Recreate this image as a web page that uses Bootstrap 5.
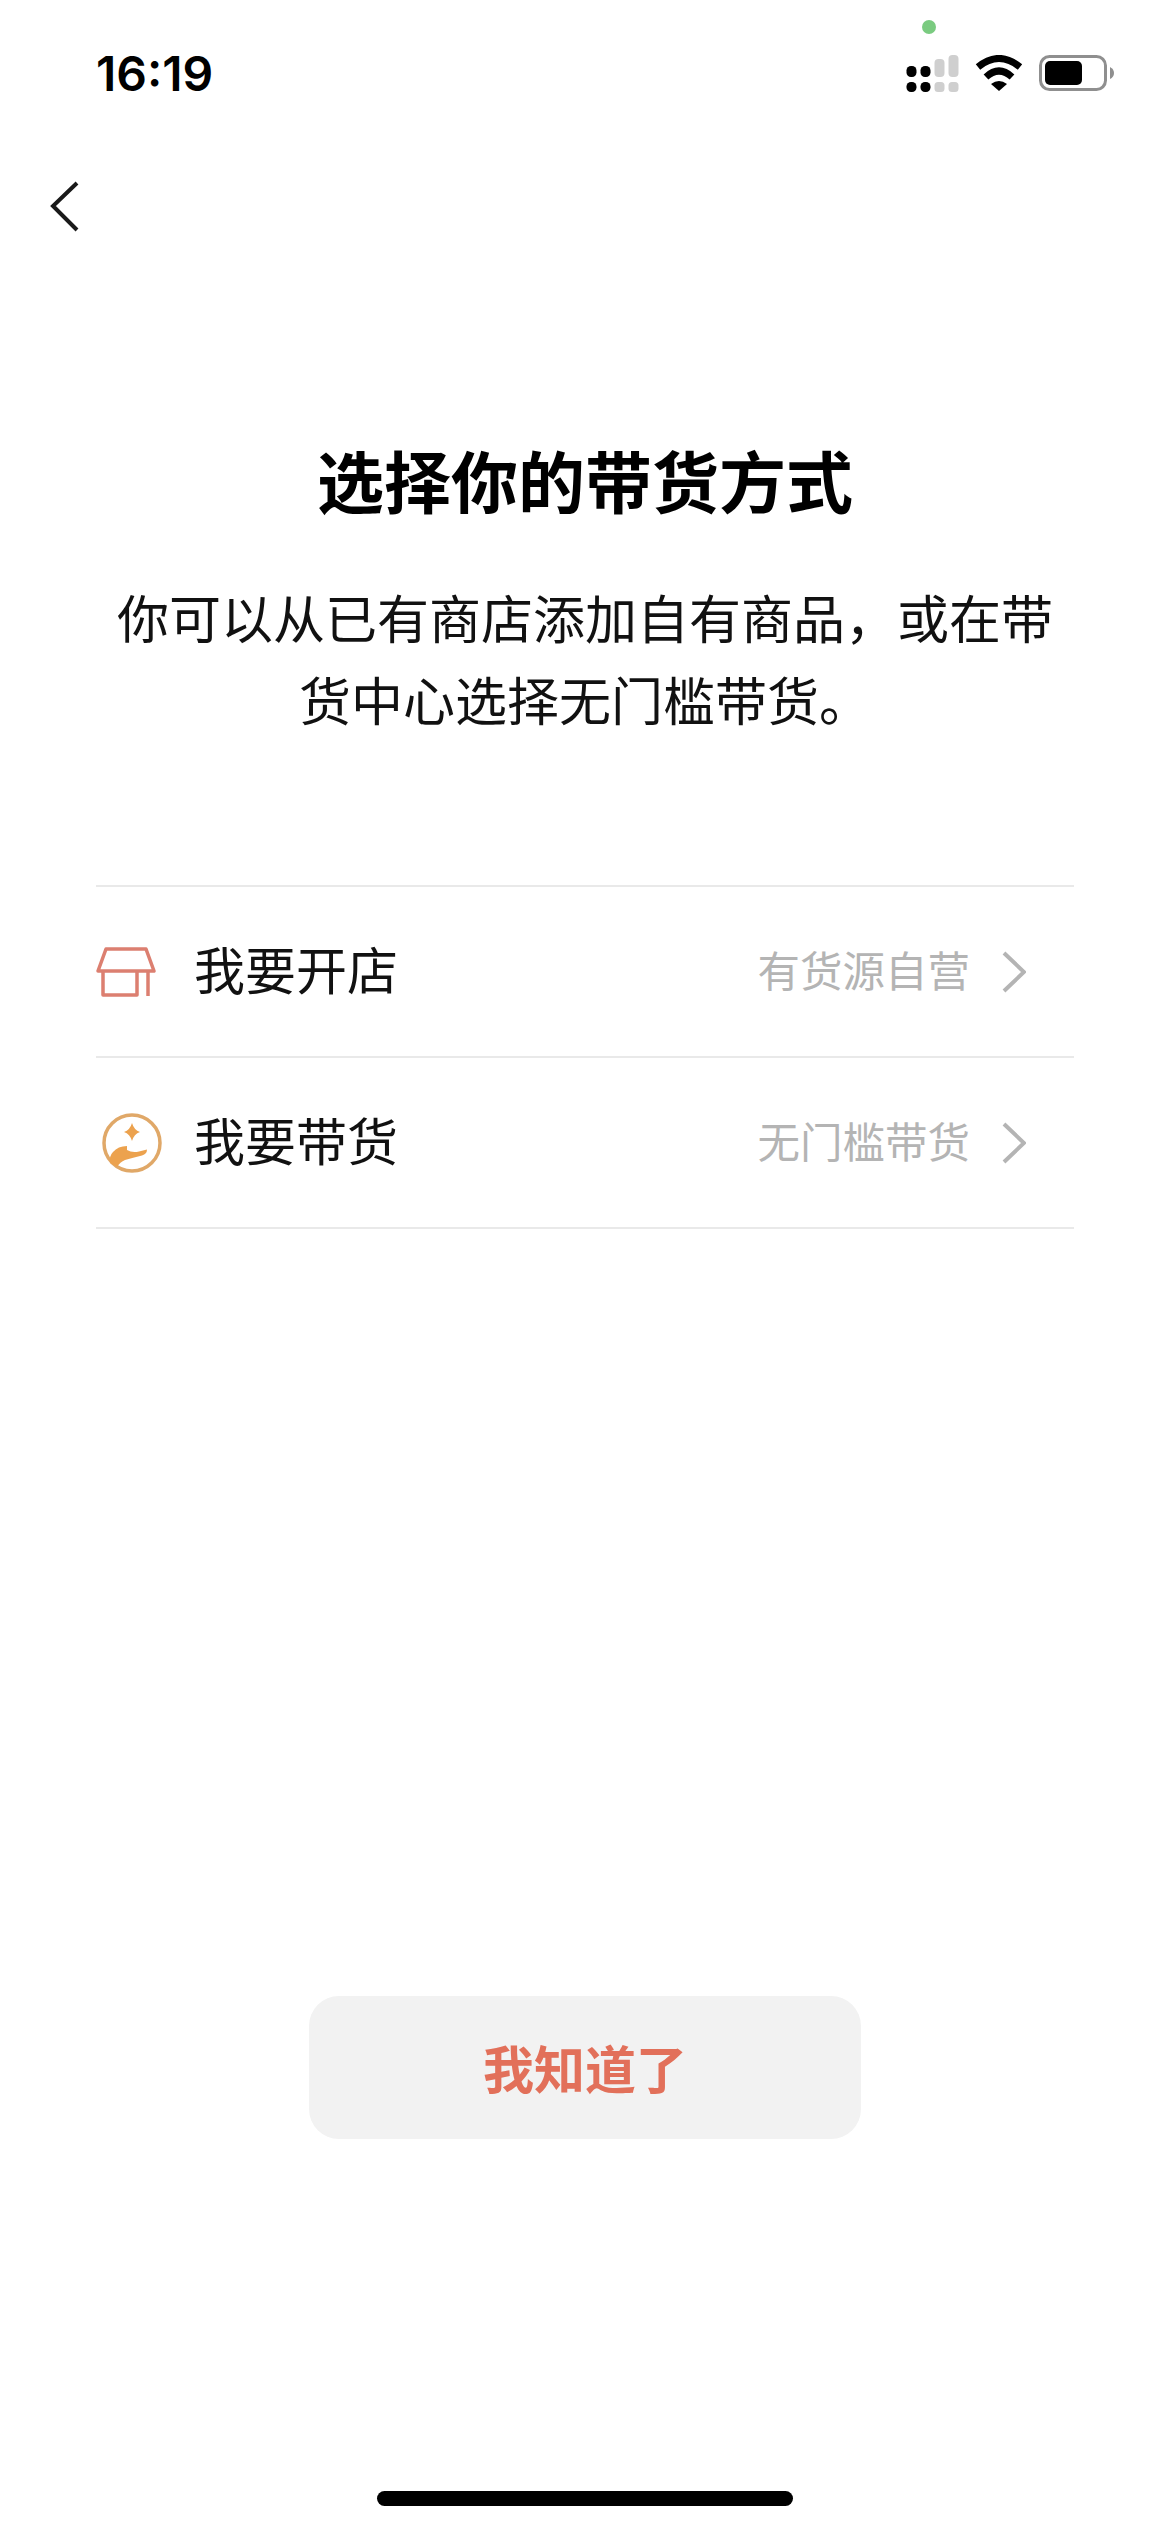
<!DOCTYPE html>
<html lang="zh-CN">
<head>
    <meta charset="UTF-8" />
    <meta name="viewport" content="width=device-width, initial-scale=1.0"/>
    <title>选择你的带货方式</title>
    <link href="https://cdn.jsdelivr.net/npm/bootstrap@5.3.0/dist/css/bootstrap.min.css" rel="stylesheet">
    <style>
        body {
            background: #fff;
            color: #000;
            font-family: "Noto Sans CJK SC", "Liberation Sans", sans-serif;
        }
        .screen {
            width: 1170px;
            height: 2532px;
            overflow: hidden;
        }
        .status-row {
            height: 100px;
            padding: 0 55px 0 96px;
            position: relative;
        }
        .status-time {
            font-family: Inter, "Liberation Sans", sans-serif;
            font-size: 48px;
            font-weight: 600;
            line-height: 50px;
            padding-top: 49px;
        }
        .status-icons {
            padding-top: 55px;
            gap: 16px;
        }
        .green-dot {
            position: absolute;
            left: 922px;
            top: 20px;
            width: 14px;
            height: 14px;
            border-radius: 50%;
            background: #7acb80;
        }
        .back-row {
            height: 100px;
            padding: 81px 0 0 50px;
        }
        .page-title {
            font-size: 67px;
            font-weight: 700;
            line-height: 90px;
            text-align: center;
            margin: 234px 0 0;
        }
        .page-sub {
            font-size: 52px;
            line-height: 82px;
            text-align: center;
            color: #111;
            width: 960px;
            margin: 52px auto 0;
        }
        .choice-list {
            margin: 145px 96px 0;
            border-top: 2px solid #e9e9e9;
        }
        .choice-list > .choice-item,
        .choice-list > .choice-item:last-child {
            height: 171px;
            padding: 0;
            border-bottom: 2px solid #e9e9e9;
            background: transparent;
        }
        .choice-icon {
            width: 98px;
        }
        .choice-name {
            font-size: 51px;
            color: #111;
            padding-bottom: 6px;
        }
        .choice-hint {
            font-size: 42.5px;
            color: #b4b4b4;
            margin-right: 32px;
            padding-bottom: 6px;
        }
        .choice-arrow {
            margin-right: 48px;
        }
        .know-btn {
            width: 552px;
            height: 143px;
            margin: 0 auto;
            background: #f2f2f2;
            border: 0;
            border-radius: 30px;
            font-size: 51px;
            font-weight: 700;
            color: #e2705a;
        }
        .know-btn:hover {
            background: #f2f2f2;
            color: #e2705a;
        }
        .btn-wrap {
            margin-top: 767px;
        }
        .home-bar {
            width: 416px;
            height: 15px;
            border-radius: 8px;
            background: #000;
            margin: 352px auto 0;
        }
    </style>
</head>
<body>
<div class="screen d-flex flex-column">
    <div class="status-row d-flex justify-content-between">
        <div class="status-time">16:19</div>
        <span class="green-dot"></span>
        <div class="status-icons d-flex align-items-start">
            <svg width="53" height="38" viewBox="0 0 53 38">
                <g fill="#000">
                    <rect x="0.5" y="11" width="10" height="11" rx="4.5"/>
                    <rect x="14.5" y="11" width="10" height="11" rx="4.5"/>
                    <rect x="0.5" y="27" width="10" height="10" rx="4.5"/>
                    <rect x="14.5" y="27" width="10" height="10" rx="4.5"/>
                </g>
                <g fill="#cfcfcf">
                    <rect x="28.5" y="4" width="10" height="18" rx="4"/>
                    <rect x="42.5" y="0" width="10" height="22" rx="4"/>
                    <rect x="28.5" y="27" width="10" height="10" rx="3.5"/>
                    <rect x="42.5" y="27" width="10" height="10" rx="3.5"/>
                </g>
            </svg>
            <svg width="48" height="37" viewBox="0 0 48 37">
                <path d="M3 12 Q24 -5 45 12" fill="none" stroke="#000" stroke-width="7"/>
                <path d="M11 22 Q24 10 37 22" fill="none" stroke="#000" stroke-width="7"/>
                <path d="M16 29 Q24 23 32 29 L24 36 Z" fill="#000"/>
            </svg>
            <svg width="76" height="36" viewBox="0 0 76 36">
                <rect x="1.5" y="1.5" width="65" height="33" rx="9" fill="none" stroke="#8f8f8f" stroke-width="3"/>
                <rect x="6" y="6" width="37" height="24" rx="5" fill="#000"/>
                <path d="M71 12 Q75 14 75 18 Q75 22 71 24 Z" fill="#8f8f8f"/>
            </svg>
        </div>
    </div>
    <div class="back-row">
        <svg width="30" height="52" viewBox="0 0 30 52">
            <path d="M27 2 L3 25 L27 49" fill="none" stroke="#1a1a1a" stroke-width="4"/>
        </svg>
    </div>
    <h1 class="page-title">选择你的带货方式</h1>
    <p class="page-sub mb-0">你可以从已有商店添加自有商品&#xFF0C;或在带货中心选择无门槛带货。</p>
    <div class="choice-list list-group list-group-flush">
        <div class="choice-item list-group-item d-flex align-items-center">
            <div class="choice-icon d-flex">
                <svg width="62" height="54" viewBox="0 0 62 54">
                    <g fill="none" stroke="#dc7f70" stroke-width="3.5" stroke-linejoin="round">
                        <path d="M10 4 H50 L58 26 H2 Z"/>
                        <path d="M7 27 V50 H41 V27"/>
                        <path d="M52 27 V51"/>
                    </g>
                </svg>
            </div>
            <span class="choice-name">我要开店</span>
            <span class="choice-hint ms-auto">有货源自营</span>
            <svg class="choice-arrow" width="24" height="42" viewBox="0 0 24 42">
                <path d="M2 2 L22 21 L2 40" fill="none" stroke="#b4b4b4" stroke-width="4"/>
            </svg>
        </div>
        <div class="choice-item list-group-item d-flex align-items-center">
            <div class="choice-icon d-flex">
                <svg width="66" height="62" viewBox="0 0 66 62">
                    <circle cx="36" cy="31" r="28" fill="none" stroke="#e0a868" stroke-width="3.5"/>
                    <path d="M36 11 Q38 18 44 20 Q38 22 36 29 Q34 22 28 20 Q34 18 36 11 Z" fill="#eca24e"/>
                    <path d="M14 51 Q13 44 17 40 Q22 34 31 34 L31 38 Q36 41 43 39.5 L51 37.5 Q51 42 46 43.5 Q36 46 29 48 Q24 50 21 55 Z" fill="#eca24e"/>
                </svg>
            </div>
            <span class="choice-name">我要带货</span>
            <span class="choice-hint ms-auto">无门槛带货</span>
            <svg class="choice-arrow" width="24" height="42" viewBox="0 0 24 42">
                <path d="M2 2 L22 21 L2 40" fill="none" stroke="#b4b4b4" stroke-width="4"/>
            </svg>
        </div>
    </div>
    <div class="btn-wrap d-flex">
        <button type="button" class="know-btn btn">我知道了</button>
    </div>
    <div class="home-bar"></div>
</div>
<script src="https://cdn.jsdelivr.net/npm/bootstrap@5.3.0/dist/js/bootstrap.bundle.min.js"></script>
</body>
</html>
